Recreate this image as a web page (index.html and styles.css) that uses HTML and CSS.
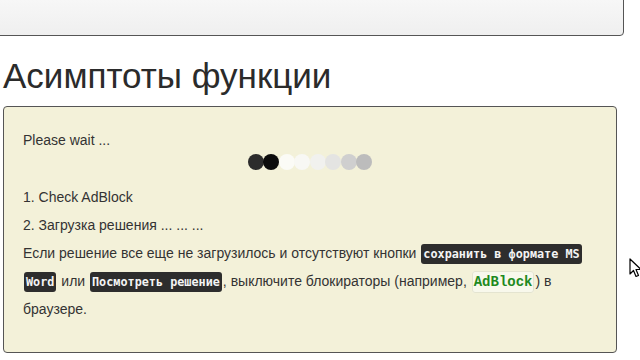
FILE: index.html
```html
<!DOCTYPE html>
<html lang="ru">
<head>
  <meta charset="UTF-8">
  <title>Асимптоты функции</title>
  <link rel="stylesheet" href="styles.css">
</head>
<body>

  <div class="top-panel"></div>

  <h1>Асимптоты функции</h1>

  <div class="solution">
    <p>Please wait ...</p>
    <div class="loader">
      <span class="dot d1"></span>
      <span class="dot d2"></span>
      <span class="dot d3"></span>
      <span class="dot d4"></span>
      <span class="dot d5"></span>
      <span class="dot d6"></span>
      <span class="dot d7"></span>
      <span class="dot d8"></span>
    </div>
    <p>1. Check AdBlock</p>
    <p>2. Загрузка решения ... ... ...</p>
    <p>Если решение все еще не загрузилось и отсутствуют кнопки <span class="btn-name">сохранить в формате MS Word</span> или <span class="btn-name">Посмотреть решение</span>, выключите блокираторы (например, <code class="green">AdBlock</code>) в браузере.</p>
  </div>

  <svg class="cursor" width="13" height="20" viewBox="0 0 13 20">
    <path d="M1 1 L1 16 L4.5 12.5 L7 18.5 L9.5 17.5 L7 11.5 L12 11.5 Z" fill="#fff" stroke="#000" stroke-width="1.2" stroke-linejoin="round"/>
  </svg>

</body>
</html>
```

FILE: styles.css
```css
body {
  margin: 0;
  padding: 0 23px 0 3px;
  background: #fff;
  font-family: 'Liberation Sans', Arial, sans-serif;
  font-size: 14px;
  color: #333;
  overflow: hidden;
}

.top-panel {
  height: 44px;
  margin: -10px -7px 0 -20px;
  border: 1px solid #555;
  border-radius: 0 0 4px 4px;
  background: linear-gradient(#f9f9f9, #efefef);
}

h1 {
  margin: 20px 0 10px;
  font-size: 35px;
  font-weight: 500;
  line-height: 40px;
  color: #2b2b2b;
}

.solution {
  padding: 19px 20px 29px 19px;
  border: 1px solid #555;
  border-radius: 4px;
  background: #f3f1d9;
}

.solution p {
  margin: 0;
  line-height: 28px;
}

.loader {
  display: flex;
  justify-content: center;
  height: 16px;
  margin: 0 0 13px;
}

.dot {
  width: 16px;
  height: 16px;
  margin-right: -0.5px;
  border-radius: 50%;
}

.d1 { background: #2c2c2c; }
.d2 { background: #0c0c0c; }
.d3 { background: #fbfbf6; }
.d4 { background: #f8f8f4; }
.d5 { background: #f1f1ee; }
.d6 { background: #e4e4e2; }
.d7 { background: #cfcfcf; }
.d8 { background: #bcbcbc; }

.btn-name {
  padding: 3px 2px;
  margin: 0 1px;
  border-radius: 3px;
  background: #2d2d2d;
  color: #f4f4f4;
  font-family: 'DejaVu Sans Mono', monospace;
  font-size: 11.8px;
  font-weight: bold;
  line-height: 1;
  box-decoration-break: clone;
  -webkit-box-decoration-break: clone;
}

.green {
  padding: 2px 1px;
  margin: 0 1px;
  border: 1px solid #e4e4d0;
  border-radius: 3px;
  background: #f8f8ec;
  color: #1f8a1f;
  font-family: 'Liberation Mono', monospace;
  font-size: 14px;
  font-weight: bold;
  line-height: 1;
}

.cursor {
  position: absolute;
  left: 629px;
  top: 258px;
}
```
